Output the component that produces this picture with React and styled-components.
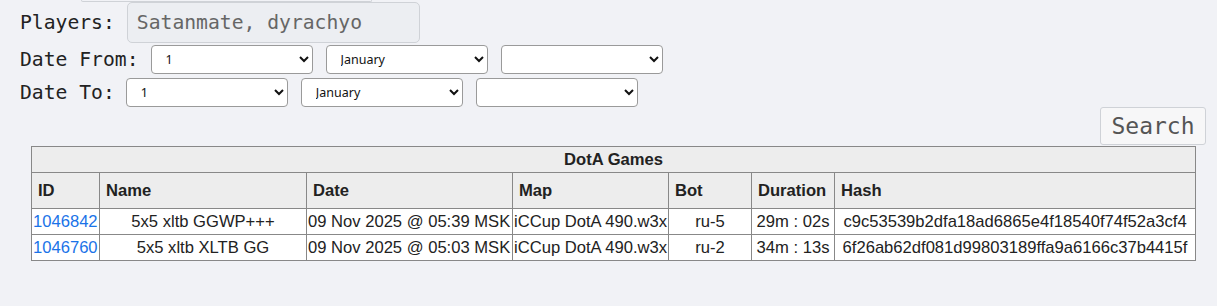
import * as React from "react";
import styled, { createGlobalStyle } from "styled-components";

const GlobalStyle = createGlobalStyle`
  html, body {
    margin: 0;
    padding: 0;
    background: #f1f2f6;
  }
`;

const Page = styled.div`
  font-family: "DejaVu Sans Mono", monospace;
  color: #222;
`;

const Stub = styled.div`
  margin-left: 81px;
  width: 289px;
  height: 1px;
  border: 1px solid #cfd2d7;
  border-top: none;
  border-radius: 0 0 4px 4px;
`;

const Form = styled.form`
  display: flex;
  flex-direction: column;
  padding-left: 20px;
`;

const Row = styled.div`
  display: flex;
  align-items: center;
  margin-top: ${({ $top }) => $top}px;
`;

const Label = styled.label`
  font-size: 19.7px;
  color: #222;
  margin-right: ${({ $gap }) => $gap}px;
  white-space: nowrap;
`;

const TextInput = styled.input`
  box-sizing: border-box;
  width: 293px;
  height: 41px;
  padding: 0 0 0 9px;
  font-family: "DejaVu Sans Mono", monospace;
  font-size: 19.7px;
  color: #666;
  background: #eceef2;
  border: 1px solid #cfd2d7;
  border-radius: 5px;
  outline: none;
`;

const Select = styled.select`
  box-sizing: border-box;
  width: 162px;
  height: 29px;
  margin-right: 13px;
  padding: 0 6px 0 10px;
  font-family: "Noto Sans", sans-serif;
  font-size: 12.5px;
  color: #111;
  background: #fff;
  border: 1px solid #9a9a9a;
  border-radius: 4px;
`;

const SearchBar = styled.div`
  display: flex;
  justify-content: flex-end;
  padding-right: 11px;
`;

const SearchButton = styled.button`
  box-sizing: border-box;
  width: 106px;
  height: 38px;
  padding: 0;
  font-family: "DejaVu Sans Mono", monospace;
  font-size: 23px;
  color: #555;
  background: #f7f7f8;
  border: 1px solid #cfd2d7;
  border-radius: 3px;
`;

const Table = styled.table`
  margin: 1px 0 0 31px;
  width: 1164px;
  border-collapse: collapse;
  table-layout: fixed;
  font-family: "Liberation Sans", Arial, sans-serif;
  font-size: 16.6px;
  color: #222;
  border: 1px solid #888;
`;

const Caption = styled.th`
  height: 25px;
  padding: 0;
  background: #ededed;
  border: 1px solid #888;
  font-weight: bold;
  text-align: center;
`;

const Head = styled.th`
  height: 35px;
  padding: 0 6px;
  background: #ededed;
  border: 1px solid #888;
  font-weight: bold;
  text-align: left;
`;

const Cell = styled.td`
  height: 25px;
  padding: 0 1px;
  background: #fff;
  border: 1px solid #888;
  text-align: ${({ $align }) => $align || "center"};
  white-space: nowrap;
  overflow: hidden;
`;

const IdLink = styled.a`
  color: #1a73e8;
  text-decoration: none;
`;

const days = Array.from({ length: 31 }, (_, i) => i + 1);
const months = [
  "January", "February", "March", "April", "May", "June",
  "July", "August", "September", "October", "November", "December",
];

const games = [
  {
    id: "1046842",
    name: "5x5 xltb GGWP+++",
    date: "09 Nov 2025 @ 05:39 MSK",
    map: "iCCup DotA 490.w3x",
    bot: "ru-5",
    duration: "29m : 02s",
    hash: "c9c53539b2dfa18ad6865e4f18540f74f52a3cf4",
  },
  {
    id: "1046760",
    name: "5x5 xltb XLTB GG",
    date: "09 Nov 2025 @ 05:03 MSK",
    map: "iCCup DotA 490.w3x",
    bot: "ru-2",
    duration: "34m : 13s",
    hash: "6f26ab62df081d99803189ffa9a6166c37b4415f",
  },
];

const widths = [68, 207, 206, 156, 83, 83, 361];
const columns = ["ID", "Name", "Date", "Map", "Bot", "Duration", "Hash"];

const DateSelects = () => (
  <>
    <Select defaultValue="1">
      {days.map((d) => (
        <option key={d}>{d}</option>
      ))}
    </Select>
    <Select defaultValue="January">
      {months.map((m) => (
        <option key={m}>{m}</option>
      ))}
    </Select>
    <Select defaultValue="">
      <option value=""></option>
      <option>2025</option>
      <option>2024</option>
    </Select>
  </>
);

const App = () => {
  return (
    <Page>
      <GlobalStyle />
      <Stub />
      <Form onSubmit={(e) => e.preventDefault()}>
        <Row $top={0}>
          <Label $gap={12}>Players:</Label>
          <TextInput defaultValue="Satanmate, dyrachyo" />
        </Row>
        <Row $top={2}>
          <Label $gap={12}>Date From:</Label>
          <DateSelects />
        </Row>
        <Row $top={4}>
          <Label $gap={11}>Date To:</Label>
          <DateSelects />
        </Row>
      </Form>
      <SearchBar>
        <SearchButton type="button">Search</SearchButton>
      </SearchBar>
      <Table>
        <colgroup>
          {widths.map((w, i) => (
            <col key={i} style={{ width: w }} />
          ))}
        </colgroup>
        <thead>
          <tr>
            <Caption colSpan={7}>DotA Games</Caption>
          </tr>
          <tr>
            {columns.map((c) => (
              <Head key={c}>{c}</Head>
            ))}
          </tr>
        </thead>
        <tbody>
          {games.map((g) => (
            <tr key={g.id}>
              <Cell $align="left">
                <IdLink href="#">{g.id}</IdLink>
              </Cell>
              <Cell>{g.name}</Cell>
              <Cell $align="left">{g.date}</Cell>
              <Cell $align="left">{g.map}</Cell>
              <Cell>{g.bot}</Cell>
              <Cell>{g.duration}</Cell>
              <Cell>{g.hash}</Cell>
            </tr>
          ))}
        </tbody>
      </Table>
    </Page>
  );
};

export default App;
